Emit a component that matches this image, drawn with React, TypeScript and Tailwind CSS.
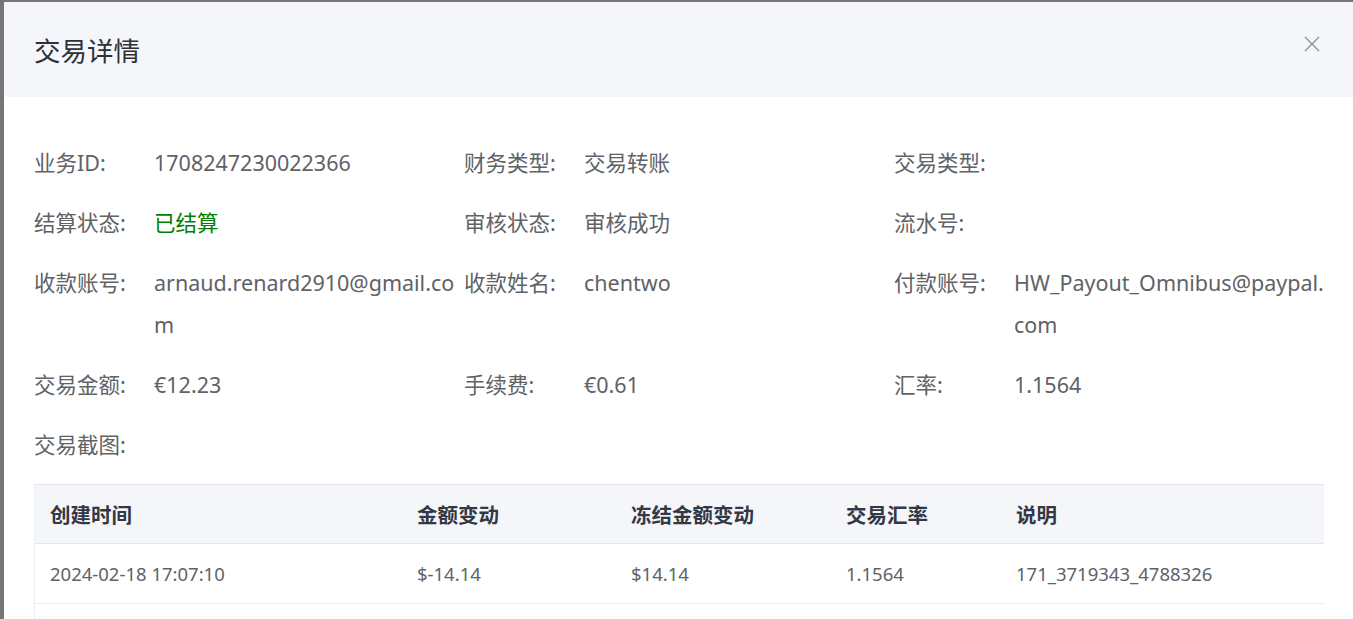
import React from "react";

const FONT = '"Noto Sans", "Noto Sans CJK SC", sans-serif';

type Item = { label: string; value?: string; green?: boolean };

const items: Item[] = [
  { label: "业务ID:", value: "1708247230022366" },
  { label: "财务类型:", value: "交易转账" },
  { label: "交易类型:" },
  { label: "结算状态:", value: "已结算", green: true },
  { label: "审核状态:", value: "审核成功" },
  { label: "流水号:" },
  { label: "收款账号:", value: "arnaud.renard2910@gmail.com" },
  { label: "收款姓名:", value: "chentwo" },
  { label: "付款账号:", value: "HW_Payout_Omnibus@paypal.com" },
  { label: "交易金额:", value: "€12.23" },
  { label: "手续费:", value: "€0.61" },
  { label: "汇率:", value: "1.1564" },
  { label: "交易截图:" },
];

const cols = [
  { title: "创建时间", w: 367 },
  { title: "金额变动", w: 214 },
  { title: "冻结金额变动", w: 215 },
  { title: "交易汇率", w: 170 },
  { title: "说明", w: 323 },
];

const row = ["2024-02-18 17:07:10", "$-14.14", "$14.14", "1.1564", "171_3719343_4788326"];

export default function App() {
  return (
    <div
      className="flex h-[619px] w-[1353px] overflow-hidden bg-[#767676] pt-[2px] pl-[4px]"
      style={{ fontFamily: FONT }}
    >
      <div className="flex flex-1 flex-col bg-white">
        <div className="flex h-[95px] shrink-0 justify-between bg-[#f5f6fa] pl-[30px] pr-[33px]">
          <div className="flex items-center pt-[4px] text-[26.5px] text-[#303133]">交易详情</div>
          <button className="mt-[34px] h-[16px] w-[16px] self-start text-[#909399]" aria-label="close">
            <svg viewBox="0 0 16 16" width="16" height="16" fill="none" stroke="currentColor" strokeWidth="1.4">
              <path d="M1 1 L15 15 M15 1 L1 15" />
            </svg>
          </button>
        </div>

        <div className="flex flex-col gap-[18px] pl-[30px] pr-[29px] pt-[45px]">
          <div className="grid grid-cols-3 gap-y-[18px]">
            {items.map((it, i) => (
              <div key={i} className="flex text-[21.5px] leading-[42px] text-[#606266]">
                <div className="w-[120px] shrink-0">{it.label}</div>
                <div
                  className={`min-w-0 flex-1 break-all ${it.green ? "text-[#008000]" : "text-[#606266]"}`}
                >
                  {it.value}
                </div>
              </div>
            ))}
          </div>

          <div className="border-l border-[#ebeef5]">
            <table className="w-[1289px] table-fixed border-collapse">
              <colgroup>
                {cols.map((c, i) => (
                  <col key={i} style={{ width: c.w }} />
                ))}
              </colgroup>
              <thead>
                <tr className="h-[59px] border-t border-b border-[#e4e7ee] bg-[#f5f6fa]">
                  {cols.map((c, i) => (
                    <th
                      key={i}
                      className="pl-[15px] text-left text-[20.5px] font-bold text-[#333844]"
                      style={{ fontFamily: '"Noto Sans CJK SC", sans-serif' }}
                    >
                      {c.title}
                    </th>
                  ))}
                </tr>
              </thead>
              <tbody>
                <tr className="h-[60px] border-b border-[#ebeef5]">
                  {row.map((v, i) => (
                    <td key={i} className="pl-[15px] text-left text-[18.5px] font-normal text-[#606266]">
                      {v}
                    </td>
                  ))}
                </tr>
              </tbody>
            </table>
            <div className="h-[40px]" />
          </div>
        </div>
      </div>
    </div>
  );
}
